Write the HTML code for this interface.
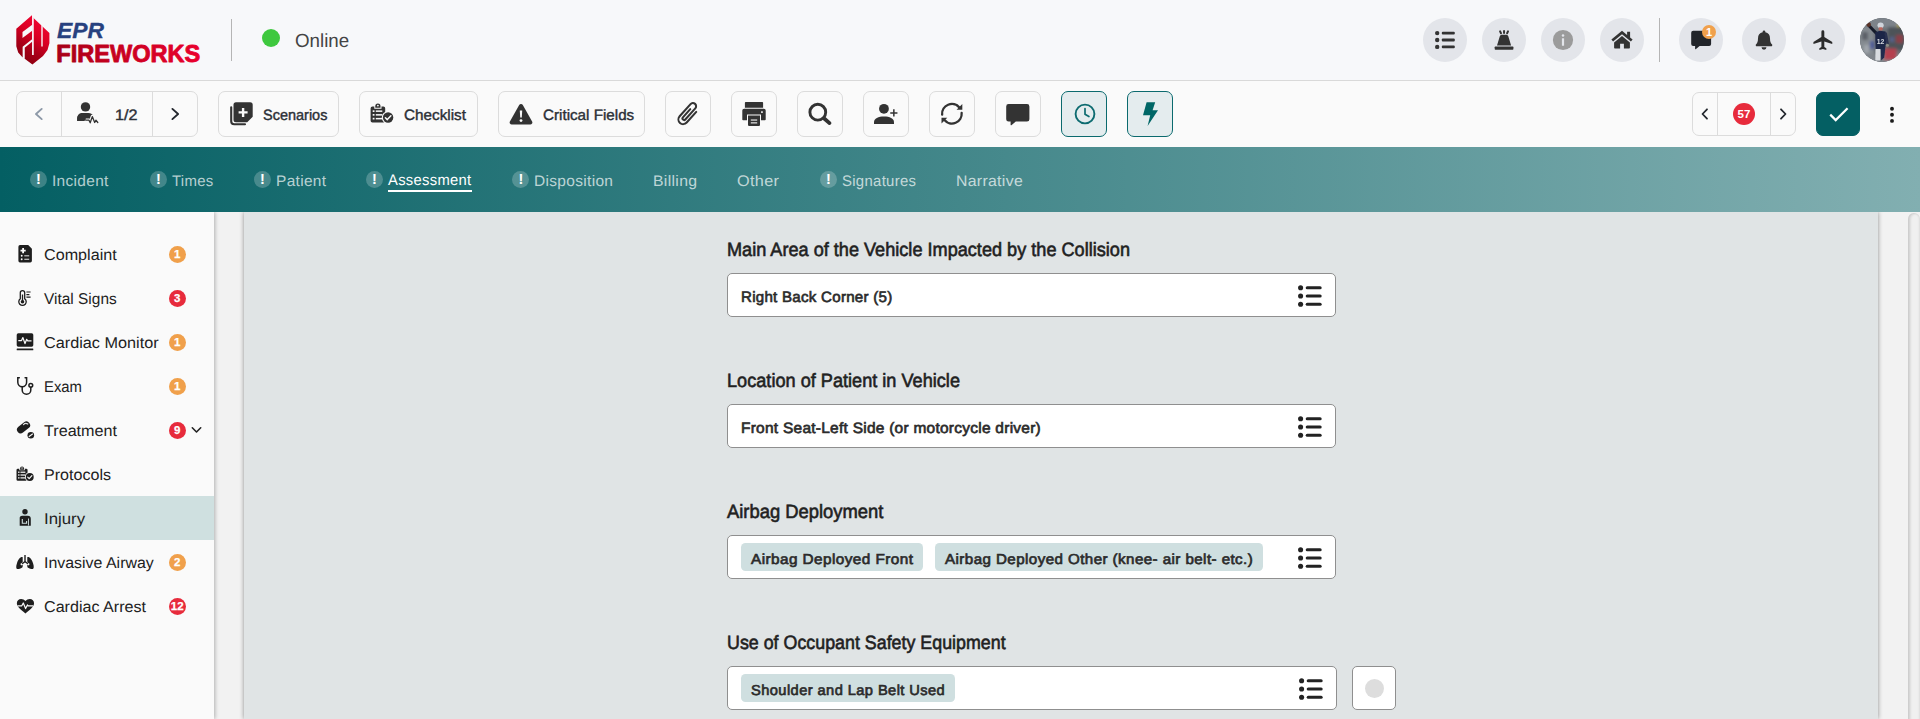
<!DOCTYPE html>
<html lang="en">
<head>
<meta charset="utf-8">
<title>EPR Fireworks - Assessment - Injury</title>
<style>
*{box-sizing:border-box;margin:0;padding:0}
html,body{width:1920px;height:719px;overflow:hidden}
body{font-family:"Liberation Sans",sans-serif;background:#f2f2f2;color:#333;position:relative}
.f{display:inline-block;transform-origin:0 50%;white-space:nowrap}
.abs{position:absolute}
.tx{position:absolute;white-space:nowrap;line-height:1}
svg{display:block}

/* ---------- top header ---------- */
#hdr{z-index:6;position:absolute;left:0;top:0;width:1920px;height:81px;background:#f7f8fa;border-bottom:1px solid #d9d9d9}
#hdr .vdiv{position:absolute;width:1px;background:#b5b5b5}
.circ{position:absolute;top:18px;width:44px;height:44px;border-radius:50%;background:#e3e5ea}
.circ svg{position:absolute}
.online{left:295px;top:30.700px;font-size:19px;color:#444}
.dot{position:absolute;left:262px;top:29px;width:18px;height:18px;border-radius:50%;background:#3ec83e}


.epr{left:57.2px;top:18px;font-size:22.6px;font-weight:bold;font-style:italic;color:#27417f}
.fwk{left:56px;top:40px;font-size:25.3px;font-weight:bold;color:#c8001f}
.fwk .f{background:linear-gradient(90deg,#a90019 0%,#c4001f 35%,#e8002d 100%);-webkit-background-clip:text;background-clip:text;color:transparent}

/* ---------- toolbar ---------- */
#tb{z-index:6;position:absolute;left:0;top:81px;width:1920px;height:66px;background:#fafafa}
.btn{position:absolute;top:10px;height:46px;border:1px solid #dcdcdc;border-radius:7px;background:#fafafa}
.btn.on{background:#e4ecee;border:1.5px solid #0b6a6e}
.btn svg{position:absolute}
.btn .sep{position:absolute;top:0;width:1px;height:44px;background:#dcdcdc}
.bl{font-size:15px;color:#2b2f36;top:14.550px;-webkit-text-stroke:.4px #2b2f36}

/* ---------- tab bar ---------- */
#tabs{z-index:5;position:absolute;left:0;top:147px;width:1920px;height:65px;background:linear-gradient(90deg,#045f63 0%,#82afb1 100%)}
.tab{letter-spacing:.3px;font-size:15.300px;color:rgba(255,255,255,.7);top:25.900px}
.tab.act{color:#fff;top:24.900px}
.ex{position:absolute;top:24px;width:17px;height:17px;border-radius:50%;background:rgba(255,255,255,.22);color:#fff;font-size:14.500px;font-weight:bold;text-align:center;line-height:17px}

/* ---------- sidebar ---------- */
#side{position:absolute;left:0;top:212px;width:214px;height:507px;background:#fafafa;box-shadow:1px 0 4px rgba(0,0,0,.28)}
.it{position:absolute;left:0;width:214px;height:44px}
.it.sel{background:#cfe0e0}
.it .lb{left:44px;top:14.700px;font-size:15.600px;color:#222}
.it svg{position:absolute}
.bdg{position:absolute;left:168.5px;top:13.5px;width:17.5px;height:17.5px;border-radius:50%;color:#fff;font-size:11.500px;font-weight:bold;text-align:center;line-height:17.500px;-webkit-text-stroke:.25px #fff}
.bdg.o{background:#f0a04b}
.bdg.r{background:#e72b3c}

/* ---------- main panel ---------- */
#main{position:absolute;left:244px;top:212px;width:1634px;height:507px;background:#e0e4e5;box-shadow:0 0 4.500px rgba(0,0,0,.42)}
#sbar{position:absolute;left:1908px;top:213px;width:12px;height:520px;border-radius:6px;background:#f0f0f0;box-shadow:inset 2px 0 3px rgba(0,0,0,.16),inset -1px 0 2px rgba(0,0,0,.08)}
.lab{font-size:19.300px;color:#212121;left:483.400px;-webkit-text-stroke:.6px #212121}
.fld{position:absolute;left:483px;width:609px;height:44px;background:#fff;border:1px solid #8f8f8f;border-radius:5px}
.fld .val{letter-spacing:.25px;left:13px;top:15px;font-size:15px;color:#2b2b2b;-webkit-text-stroke:.65px #2b2b2b}
.fld svg.li{position:absolute;left:569px;top:9.500px}
.chip{position:absolute;top:7px;height:28px;border-radius:4.500px;background:#cfdfe0}
.chip .tx{letter-spacing:.4px;left:9.700px;top:8.500px;font-size:14.400px;color:#2b2b2b;-webkit-text-stroke:.65px #2b2b2b}
</style>
</head>
<body>

<!-- ================= HEADER ================= -->
<div id="hdr">

  <svg class="abs" style="left:0;top:0" width="215" height="80" viewBox="0 0 215 80">
    <defs>
      <linearGradient id="gSh" x1="0.7" y1="0.1" x2="0.3" y2="0.95">
        <stop offset="0" stop-color="#ee0530"/><stop offset="0.35" stop-color="#dc0024"/><stop offset="0.7" stop-color="#a80018"/><stop offset="1" stop-color="#8e0010"/>
      </linearGradient>
      <linearGradient id="gFw" gradientUnits="userSpaceOnUse" x1="56" y1="0" x2="201" y2="0">
        <stop offset="0" stop-color="#a60018"/><stop offset="0.4" stop-color="#c6001f"/><stop offset="1" stop-color="#ea002e"/>
      </linearGradient>
    </defs>
    <polygon points="31.9,15.2 16.3,28.8 16.3,46.3 18.2,52.5 22,56.8 32.4,64.6 43,56 47.5,50 49.4,43.2 49.4,33 33.5,18.1" fill="url(#gSh)"/>
    <g stroke="#f7f8fa" fill="none">
      <path d="M32.9 14.5v40.6" stroke-width="1.7"/>
      <path d="M42 25.3v21.2" stroke-width="1.4"/>
      <path d="M32.4 40.3L23.7 47.2v11.6" stroke-width="2.1"/>
    </g>
    <polygon points="22.5,31.9 32.2,24.7 32.2,30.7 22.5,38.1" fill="#f7f8fa"/>
    <text x="57" y="37.5" font-family="Liberation Sans, sans-serif" font-size="22.4" font-weight="bold" font-style="italic" fill="#27417f" stroke="#27417f" stroke-width="0.3" textLength="47" lengthAdjust="spacingAndGlyphs">EPR</text>
    <text x="56.3" y="61.7" font-family="Liberation Sans, sans-serif" font-size="24.8" font-weight="bold" fill="url(#gFw)" stroke="url(#gFw)" stroke-width="0.9" stroke-linejoin="round" textLength="144" lengthAdjust="spacingAndGlyphs">FIREWORKS</text>
  </svg>
  <div class="vdiv" style="left:231px;top:19px;height:42px"></div>
  <div class="dot"></div>
  <div class="tx online"><span class="f" style="transform:matrix(0.9869,0,.0005,1,0,0)">Online</span></div>

  <!-- list -->
  <div class="circ" style="left:1423px"><svg width="44" height="44" viewBox="0 0 44 44" fill="#333">
    <circle cx="14.2" cy="15.1" r="2.2"/><circle cx="14.2" cy="22" r="2.2"/><circle cx="14.2" cy="28.9" r="2.2"/>
    <rect x="18.8" y="13.7" width="13" height="2.8" rx="1"/><rect x="18.8" y="20.6" width="13" height="2.8" rx="1"/><rect x="18.8" y="27.5" width="13" height="2.8" rx="1"/>
  </svg></div>
  <!-- siren -->
  <div class="circ" style="left:1482px"><svg width="44" height="44" viewBox="0 0 44 44" fill="#333">
    <path d="M13.400 28.500h17.300a.7.700 0 0 1 .7.700v1.900a.7.700 0 0 1-.7.700H13.400a.7.700 0 0 1-.7-.7v-1.900a.7.700 0 0 1 .7-.7z"/>
    <path d="M15 27.600l2.800-9.400a2 2 0 0 1 1.900-1.500h4.700a2 2 0 0 1 1.900 1.500l2.800 9.400z"/>
    <g stroke="#333" stroke-width="2" stroke-linecap="round"><path d="M22.050 13v2M18.100 13.400l.9 1.900M26 13.400l-.9 1.900"/></g>
  </svg></div>
  <!-- info -->
  <div class="circ" style="left:1541px"><svg width="44" height="44" viewBox="0 0 44 44">
    <circle cx="22" cy="22" r="10.100" fill="#9b9b9b"/>
    <circle cx="22" cy="17.500" r="1.250" fill="#e3e5ea"/><rect x="20.900" y="20.200" width="2.200" height="7.600" rx=".5" fill="#e3e5ea"/>
  </svg></div>
  <!-- home -->
  <div class="circ" style="left:1600px"><svg width="44" height="44" viewBox="0 0 44 44" fill="#333">
    <path d="M22 12.700l-10.600 8.900 1.700 2 8.900-7.400 8.900 7.400 1.700-2-2.500-2.100v-5.800h-3v3.300z"/>
    <path d="M22 17.900l-7.900 6.600v5.300a.8.8 0 0 0 .8.800h5.200v-4.900h3.800v4.900h5.200a.8.800 0 0 0 .8-.8v-5.300z"/>
  </svg></div>
  <div class="vdiv" style="left:1659px;top:18px;height:44px"></div>
  <!-- chat with badge -->
  <div class="circ" style="left:1679px"><svg width="44" height="44" viewBox="0 0 44 44">
    <path fill="#22252a" d="M14.200 12.800h15.900a2 2 0 0 1 2 2v11.100a2 2 0 0 1-2 2h-9.500l-3.600 3.100a.5.500 0 0 1-.9-.4v-2.700h-1.900a2 2 0 0 1-2-2v-11.100a2 2 0 0 1 2-2z"/>
    <circle cx="30" cy="14" r="7" fill="#f0a04b"/>
    <text x="30" y="18" text-anchor="middle" font-family="Liberation Sans, sans-serif" font-size="11" font-weight="bold" fill="#fff">1</text>
  </svg></div>
  <!-- bell -->
  <div class="circ" style="left:1742px"><svg width="44" height="44" viewBox="0 0 44 44" fill="#333"><g transform="translate(22 21.700) scale(.95) translate(-22 -22)">
    <path d="M22 12.300a1.400 1.400 0 0 1 1.400 1.400v.5a6.300 6.300 0 0 1 4.900 6.200c0 4 1 5.400 2 6.500a1.200 1.200 0 0 1-.9 2.100h-14.800a1.200 1.200 0 0 1-.9-2.100c1-1.100 2-2.500 2-6.500a6.300 6.300 0 0 1 4.900-6.200v-.5a1.400 1.400 0 0 1 1.400-1.400z"/>
    <path d="M19.400 30h5.200a2.600 2.600 0 0 1-5.200 0z"/></g>
  </svg></div>
  <!-- plane -->
  <div class="circ" style="left:1801px"><svg width="44" height="44" viewBox="0 0 44 44" fill="#2b2b2b"><g transform="translate(21.850 21.200) scale(.97) translate(-22 -22.250)">
    <path d="M31.700 27.200v-2l-8.200-5.100v-5.600a1.500 1.500 0 0 0-3 0v5.600l-8.200 5.100v2l8.200-2.500v5.500l-2.100 1.500v1.600l3.600-1 3.600 1v-1.600l-2.100-1.500v-5.500z"/></g>
  </svg></div>
  <!-- avatar -->
  <div class="circ" style="left:1860px;background:#6b7177;overflow:hidden"><svg width="44" height="44" viewBox="0 0 44 44">
    <defs>
      <filter id="bl" x="-20%" y="-20%" width="140%" height="140%"><feGaussianBlur stdDeviation="1.500"/></filter>
      <filter id="bl2" x="-20%" y="-20%" width="140%" height="140%"><feGaussianBlur stdDeviation=".550"/></filter>
      <clipPath id="cpA"><circle cx="22" cy="22" r="22"/></clipPath>
    </defs>
    <g clip-path="url(#cpA)">
      <rect width="44" height="44" fill="#6a7076"/>
      <g filter="url(#bl)">
        <rect x="-2" y="8" width="16" height="30" fill="#858b91"/>
        <rect x="8" y="-2" width="30" height="12" fill="#7d838a"/>
        <rect x="28" y="9" width="18" height="23" fill="#4d5259"/>
        <rect x="36" y="17" width="7" height="8" fill="#8a4048"/>
        <rect x="30" y="19" width="4" height="5" fill="#56618a"/>
        <rect x="37" y="6" width="3" height="3" fill="#b9ad4a"/>
        <rect x="-2" y="36" width="48" height="10" fill="#80858b"/>
        <rect x="24" y="30.500" width="12.500" height="11.500" fill="#b5414f"/>
        <rect x="10" y="23" width="4" height="8" fill="#4e5c9c"/>
        <rect x="4" y="27" width="5" height="8" fill="#a0a6ac"/>
        <rect x="2" y="14" width="6" height="8" fill="#5c6168"/>
      </g>
      <g filter="url(#bl2)">
        <path d="M17.500 16.500L9.300 8" stroke="#161b2c" stroke-width="3.200" stroke-linecap="round"/>
        <circle cx="8.700" cy="6.600" r="2.300" fill="#5a3328"/>
        <path d="M15.300 14.200l4.500-1.500 5.800.8.600 10.500-1.200 7.200-9.200.5-.5-9z" fill="#1f2747"/>
        <path d="M25.800 15.500l1.800 10" stroke="#2a3150" stroke-width="2.400" stroke-linecap="round"/>
        <circle cx="27.400" cy="27.200" r="1.500" fill="#8d8f86"/>
        <ellipse cx="20.600" cy="7.300" rx="3.100" ry="2.900" fill="#d0d5dc"/>
        <rect x="18.700" y="9.200" width="3.900" height="3.300" rx="1" fill="#b8675e"/>
        <path d="M15.500 31h5.200l-.6 11.500h-4.800z" fill="#d9dce0"/>
        <path d="M20.700 31h4.500l-1 8.500-3 3z" fill="#232b4d"/>
      </g>
      <text x="20.600" y="25.800" text-anchor="middle" font-family="Liberation Sans, sans-serif" font-size="6.800" font-weight="bold" fill="#e8ebef" opacity=".9">12</text>
    </g>
  </svg></div>
</div>

<!-- ================= TOOLBAR ================= -->
<div id="tb">
  <!-- patient pager -->
  <div class="btn" style="left:16px;width:182px">
    <div class="sep" style="left:44px"></div><div class="sep" style="left:135px"></div>
    <svg style="left:16px;top:15px" width="12" height="14" viewBox="0 0 12 14" fill="none" stroke="#8d99a8" stroke-width="1.900" stroke-linecap="round" stroke-linejoin="round"><path d="M8.700 1.900L3 7l5.700 5.100"/></svg>
    <svg style="left:58.200px;top:7.800px" width="28" height="26" viewBox="0 0 28 26" fill="#333">
      <circle cx="10.500" cy="6.900" r="4.700"/>
      <path d="M2.200 20.900v-2.700c0-3.100 2.400-5.300 5.500-5.300h5.600c2.600 0 4.700 1.600 5.300 4l-1.300 4z"/>
      <path d="M10.800 20.200H14l1.200 2.600 2.100-6.200 2.400 5.900 1.200-2.300 1.900 2.300" fill="none" stroke="#fafafa" stroke-width="3.400" stroke-linejoin="round" stroke-linecap="round"/>
      <path d="M10.800 20.200H14l1.200 2.600 2.100-6.200 2.400 5.900 1.200-2.300 1.900 2.300" fill="none" stroke="#333" stroke-width="1.300" stroke-linejoin="round" stroke-linecap="round"/>
      <path d="M2.200 20.900v-2.700c0-3.100 2.400-5.300 5.500-5.300h3v6.500l-1.400 1.500z"/>
    </svg>
    <div class="tx bl" style="left:97.700px"><span class="f" style="transform:matrix(1.0787,0,.0005,1,0,0)">1/2</span></div>
    <svg style="left:152.300px;top:15px" width="12" height="14" viewBox="0 0 12 14" fill="none" stroke="#23272e" stroke-width="1.900" stroke-linecap="round" stroke-linejoin="round"><path d="M3.400 1.900L9.100 7l-5.700 5.100"/></svg>
  </div>
  <!-- scenarios -->
  <div class="btn" style="left:218px;width:121px">
    <svg style="left:10px;top:9px" width="26" height="26" viewBox="0 0 26 26">
      <path d="M7 1.300h14.200a2.500 2.500 0 0 1 2.500 2.500v12l-5.500 5.500h-11.200a2.500 2.500 0 0 1-2.500-2.500v-15a2.500 2.500 0 0 1 2.500-2.500z" fill="#333"/>
      <path d="M12.900 6.900h2.400v3.300h3.300v2.400h-3.300v3.300h-2.400v-3.300h-3.300v-2.400h3.300z" fill="#fafafa"/>
      <path d="M2.200 6.300v14a3 3 0 0 0 3 3h10.800" fill="none" stroke="#333" stroke-width="2.100" stroke-linecap="round"/>
    </svg>
    <div class="tx bl" style="left:44.400px"><span class="f" style="transform:matrix(0.9655,0,.0005,1,0,0)">Scenarios</span></div>
  </div>
  <!-- checklist -->
  <div class="btn" style="left:359px;width:119px">
    <svg style="left:10px;top:11px" width="26" height="24" viewBox="0 0 26 24" fill="#333">
      <path d="M5.300 3.200a2.600 2.600 0 0 1 5.200 0v1.600h-5.200z"/><circle cx="7.900" cy="2.600" r=".9" fill="#fafafa"/>
      <path d="M2.400 3.500h1.900v2.200h7.200v-2.200h1.900a1.800 1.800 0 0 1 1.800 1.800v12.500a1.800 1.800 0 0 1-1.800 1.800h-11a1.800 1.800 0 0 1-1.800-1.800v-12.500a1.800 1.800 0 0 1 1.800-1.800z"/>
      <g fill="#fafafa"><rect x="2.700" y="7.300" width="1.800" height="1.700"/><rect x="5.800" y="7.400" width="6.500" height="1.500"/><rect x="2.700" y="11" width="1.800" height="1.700"/><rect x="5.800" y="11.100" width="6.500" height="1.500"/><rect x="2.700" y="14.800" width="1.800" height="1.700"/><rect x="5.800" y="14.900" width="6.500" height="1.500"/></g>
      <circle cx="18.100" cy="14.500" r="6.300" fill="#fafafa"/>
      <circle cx="18.100" cy="14.500" r="5.200"/>
      <path d="M15.400 14.700l1.900 1.900 3.600-3.800" fill="none" stroke="#fafafa" stroke-width="1.500" stroke-linecap="round" stroke-linejoin="round"/>
    </svg>
    <div class="tx bl" style="left:44.300px"><span class="f" style="transform:matrix(1.0187,0,.0005,1,0,0)">Checklist</span></div>
  </div>
  <!-- critical fields -->
  <div class="btn" style="left:498px;width:147px">
    <svg style="left:9px;top:10.700px" width="26" height="24" viewBox="0 0 26 24">
      <path d="M11.200 2.100a2.100 2.100 0 0 1 3.600 0l9.300 16.300a2.100 2.100 0 0 1-1.800 3.100h-18.600a2.100 2.100 0 0 1-1.800-3.100z" fill="#333"/>
      <path d="M11.800 7.400h2.400l-.4 7.200h-1.600z" fill="#fafafa"/><circle cx="13" cy="17.600" r="1.450" fill="#fafafa"/>
    </svg>
    <div class="tx bl" style="left:44px"><span class="f" style="transform:matrix(1.0132,0,.0005,1,0,0)">Critical Fields</span></div>
  </div>
  <!-- paperclip -->
  <div class="btn" style="left:665px;width:46px"><svg style="left:0;top:0" width="44" height="44" viewBox="0 0 44 44" fill="none" stroke="#333" stroke-width="1.850" stroke-linecap="round" stroke-linejoin="round">
    <path transform="translate(22.100 21.900) rotate(42) scale(1.1)" d="M4.300-6.300V6.700A4.300 4.300 0 0 1-4.300 6.700V-8.100A2.900 2.900 0 0 1 1.500-8.100V5.500A1.450 1.450 0 0 1-1.400 5.500V-4.500"/>
  </svg></div>
  <!-- print -->
  <div class="btn" style="left:731px;width:46px"><svg style="left:9px;top:9px" width="28" height="28" viewBox="0 0 28 28" fill="#333">
    <path d="M4.700 1h16.600a.8.800 0 0 1 .8.800v4.900h-18.200v-4.900a.8.800 0 0 1 .8-.8z"/>
    <path d="M3.100 7.800h19.800a1.800 1.800 0 0 1 1.800 1.800v8.800a.8.800 0 0 1-.8.800h-21.800a.8.800 0 0 1-.8-.8v-8.800a1.800 1.800 0 0 1 1.800-1.800z"/>
    <rect x="20.100" y="10.300" width="1.700" height="1.600" fill="#fafafa"/>
    <path d="M6 13.500h14v11.200a1.200 1.200 0 0 1-1.200 1.200h-11.600a1.200 1.200 0 0 1-1.200-1.200z" fill="#fafafa"/>
    <path d="M7 14.500h12v9.600a.8.800 0 0 1-.8.800h-10.400a.8.800 0 0 1-.8-.8z"/>
    <rect x="9.800" y="18.400" width="6.400" height="1.300" fill="#d9d9d9"/><rect x="9.800" y="21.200" width="6.400" height="1.300" fill="#d9d9d9"/>
  </svg></div>
  <!-- search -->
  <div class="btn" style="left:797px;width:46px"><svg style="left:10px;top:10px" width="26" height="26" viewBox="0 0 26 26" fill="none" stroke="#333" stroke-linecap="round">
    <circle cx="9.800" cy="10.200" r="7.900" stroke-width="2.900"/><path d="M16.200 16.500l5.300 4.600" stroke-width="3.800"/>
  </svg></div>
  <!-- user plus -->
  <div class="btn" style="left:863px;width:46px"><svg style="left:10px;top:11px" width="28" height="24" viewBox="0 0 28 24" fill="#333">
    <circle cx="9.950" cy="5.800" r="4.900"/>
    <path d="M0 20.900v-1.600c0-3.900 4.400-5.700 10-5.700s10 1.800 10 5.700v1.600z"/>
    <path d="M19.850 6.300v7.200M16.250 9.900h7.200" fill="none" stroke="#333" stroke-width="1.500"/>
  </svg></div>
  <!-- refresh -->
  <div class="btn" style="left:929px;width:46px"><svg style="left:10px;top:10px" width="26" height="26" viewBox="0 0 26 26" fill="#333">
    <path d="M2.140 12.600A9.800 9.800 0 0 1 19.400 5.450" fill="none" stroke="#333" stroke-width="2.300" stroke-linecap="round"/>
    <path d="M22.300 2.060v5.740h-5.740z"/>
    <path d="M21.660 10.900A9.800 9.800 0 0 1 4.400 18.050" fill="none" stroke="#333" stroke-width="2.300" stroke-linecap="round"/>
    <path d="M1.500 21.440v-5.740h5.740z"/>
  </svg></div>
  <!-- chat -->
  <div class="btn" style="left:995px;width:46px"><svg style="left:9.300px;top:10.500px" width="26" height="24" viewBox="0 0 26 24" fill="#333">
    <path d="M3.600 1h18.400a2.400 2.400 0 0 1 2.400 2.400v12.800a2.400 2.400 0 0 1-2.400 2.400h-11.200l-4.400 3.600a.5.500 0 0 1-.8-.4v-3.200h-2a2.400 2.400 0 0 1-2.400-2.400v-12.800a2.400 2.400 0 0 1 2.400-2.400z"/>
  </svg></div>
  <!-- clock -->
  <div class="btn on" style="left:1061px;width:46px"><svg style="left:10.500px;top:10px" width="24" height="24" viewBox="0 0 24 24" fill="none" stroke="#0d6b70" stroke-linecap="round" stroke-linejoin="round">
    <circle cx="12" cy="12" r="9.400" stroke-width="1.900"/><path d="M12 6.600v5.700l3.900 2.300" stroke-width="1.700"/>
  </svg></div>
  <!-- bolt -->
  <div class="btn on" style="left:1127px;width:46px"><svg style="left:13px;top:8.500px" width="18" height="26" viewBox="0 0 18 26" fill="#066">
    <path d="M5.600 1.200h8.600l-2.600 8h5.400l-10.400 15.800 2.600-10.700h-7.200z"/>
  </svg></div>

  <!-- record pager -->
  <div class="btn" style="left:1692px;width:104px;top:11px;height:44px">
    <div class="sep" style="left:24px;height:42px"></div><div class="sep" style="left:77px;height:42px"></div>
    <svg style="left:6px;top:14px" width="12" height="14" viewBox="0 0 12 14" fill="none" stroke="#23272e" stroke-width="1.800" stroke-linecap="round" stroke-linejoin="round"><path d="M8 2.300L3.500 7 8 11.700"/></svg>
    <div class="abs" style="left:40px;top:10px;width:22px;height:22px;border-radius:50%;background:#e72b3c;color:#fff;font-size:11.500px;font-weight:bold;text-align:center;line-height:22px">57</div>
    <svg style="left:83.500px;top:14px" width="12" height="14" viewBox="0 0 12 14" fill="none" stroke="#23272e" stroke-width="1.800" stroke-linecap="round" stroke-linejoin="round"><path d="M4 2.300L8.500 7 4 11.700"/></svg>
  </div>
  <div class="btn" style="left:1816px;width:44px;top:11px;height:44px;background:#045f63;border-color:#045f63;border-radius:7px">
    <svg style="left:11px;top:13px" width="22" height="18" viewBox="0 0 22 18" fill="none" stroke="#fff" stroke-width="2.200" stroke-linecap="square" stroke-linejoin="miter"><path d="M3 9.400l4.700 4.700L18.800 3"/></svg>
  </div>
  <svg class="abs" style="left:1887px;top:24px" width="10" height="20" viewBox="0 0 10 20" fill="#1b1b1b"><circle cx="5" cy="3.700" r="1.950"/><circle cx="5" cy="9.800" r="1.950"/><circle cx="5" cy="15.900" r="1.950"/></svg>
</div>

<!-- ================= TAB BAR ================= -->
<div id="tabs">
  <div class="ex" style="left:30px">!</div><div class="tx tab" style="left:52.3px"><span class="f" style="transform:matrix(1.0128,0,.0005,1,0,0)">Incident</span></div>
  <div class="ex" style="left:150px">!</div><div class="tx tab" style="left:171.7px"><span class="f" style="transform:matrix(0.9770,0,.0005,1,0,0)">Times</span></div>
  <div class="ex" style="left:254px">!</div><div class="tx tab" style="left:275.7px"><span class="f" style="transform:matrix(1.0114,0,.0005,1,0,0)">Patient</span></div>
  <div class="ex" style="left:366px">!</div><div class="tx tab act" style="left:388.3px"><span class="f" style="transform:matrix(0.9663,0,.0005,1,0,0)">Assessment</span></div>
  <div class="abs" style="left:388px;top:43px;width:84px;height:1.5px;background:#fff"></div>
  <div class="ex" style="left:512.3px">!</div><div class="tx tab" style="left:534px"><span class="f" style="transform:matrix(1.0150,0,.0005,1,0,0)">Disposition</span></div>
  <div class="tx tab" style="left:653.3px"><span class="f" style="transform:matrix(1.0344,0,.0005,1,0,0)">Billing</span></div>
  <div class="tx tab" style="left:737px"><span class="f" style="transform:matrix(1.0637,0,.0005,1,0,0)">Other</span></div>
  <div class="ex" style="left:820px">!</div><div class="tx tab" style="left:841.7px"><span class="f" style="transform:matrix(0.9758,0,.0005,1,0,0)">Signatures</span></div>
  <div class="tx tab" style="left:956.3px"><span class="f" style="transform:matrix(1.0345,0,.0005,1,0,0)">Narrative</span></div>
</div>

<!-- ================= MAIN ================= -->
<div id="main">
  <div class="tx lab" style="top:27.600px"><span class="f" style="transform:matrix(0.9400,0,.0005,1,0,0)">Main Area of the Vehicle Impacted by the Collision</span></div>
  <div class="fld" style="top:61px"><div class="tx val"><span class="f" style="transform:matrix(1.0079,0,.0005,1,0,0)">Right Back Corner (5)</span></div><svg class="li" width="26" height="24" viewBox="0 0 26 24" fill="#222"><circle cx="3.600" cy="3.700" r="2.550"/><circle cx="3.600" cy="11.950" r="2.550"/><circle cx="3.600" cy="20.200" r="2.550"/><rect x="8.700" y="2.150" width="16" height="3.100" rx="1.550"/><rect x="8.700" y="10.400" width="16" height="3.100" rx="1.550"/><rect x="8.700" y="18.650" width="16" height="3.100" rx="1.550"/></svg></div>

  <div class="tx lab" style="top:158.600px"><span class="f" style="transform:matrix(0.9409,0,.0005,1,0,0)">Location of Patient in Vehicle</span></div>
  <div class="fld" style="top:192px"><div class="tx val"><span class="f" style="transform:matrix(1.0315,0,.0005,1,0,0)">Front Seat-Left Side (or motorcycle driver)</span></div><svg class="li" width="26" height="24" viewBox="0 0 26 24" fill="#222"><circle cx="3.600" cy="3.700" r="2.550"/><circle cx="3.600" cy="11.950" r="2.550"/><circle cx="3.600" cy="20.200" r="2.550"/><rect x="8.700" y="2.150" width="16" height="3.100" rx="1.550"/><rect x="8.700" y="10.400" width="16" height="3.100" rx="1.550"/><rect x="8.700" y="18.650" width="16" height="3.100" rx="1.550"/></svg></div>

  <div class="tx lab" style="top:289.600px"><span class="f" style="transform:matrix(0.9537,0,.0005,1,0,0)">Airbag Deployment</span></div>
  <div class="fld" style="top:323px">
    <div class="chip" style="left:13px;width:182px"><div class="tx"><span class="f" style="transform:matrix(1.0657,0,.0005,1,0,0)">Airbag Deployed Front</span></div></div>
    <div class="chip" style="left:207px;width:328px"><div class="tx"><span class="f" style="transform:matrix(1.0528,0,.0005,1,0,0)">Airbag Deployed Other (knee- air belt- etc.)</span></div></div>
    <svg class="li" width="26" height="24" viewBox="0 0 26 24" fill="#222"><circle cx="3.600" cy="3.700" r="2.550"/><circle cx="3.600" cy="11.950" r="2.550"/><circle cx="3.600" cy="20.200" r="2.550"/><rect x="8.700" y="2.150" width="16" height="3.100" rx="1.550"/><rect x="8.700" y="10.400" width="16" height="3.100" rx="1.550"/><rect x="8.700" y="18.650" width="16" height="3.100" rx="1.550"/></svg>
  </div>

  <div class="tx lab" style="top:420.600px"><span class="f" style="transform:matrix(0.9251,0,.0005,1,0,0)">Use of Occupant Safety Equipment</span></div>
  <div class="fld" style="top:454px;width:610px">
    <div class="chip" style="left:13px;width:214px"><div class="tx"><span class="f" style="transform:matrix(1.0198,0,.0005,1,0,0)">Shoulder and Lap Belt Used</span></div></div>
    <svg class="li" style="left:569.500px" width="26" height="24" viewBox="0 0 26 24" fill="#222"><circle cx="3.600" cy="3.700" r="2.550"/><circle cx="3.600" cy="11.950" r="2.550"/><circle cx="3.600" cy="20.200" r="2.550"/><rect x="8.700" y="2.150" width="16" height="3.100" rx="1.550"/><rect x="8.700" y="10.400" width="16" height="3.100" rx="1.550"/><rect x="8.700" y="18.650" width="16" height="3.100" rx="1.550"/></svg>
  </div>
  <div class="fld" style="top:454px;left:1108px;width:44px"><div class="abs" style="left:12px;top:12px;width:19px;height:19px;border-radius:50%;background:#ddd"></div></div>
</div>
<div id="sbar"></div>

<!-- ================= SIDEBAR ================= -->
<div id="side">
  <div class="it" style="top:20px">
    <svg style="left:12px;top:9px" width="26" height="26" viewBox="0 0 26 26">
      <path d="M8 4.100h8.200l3.700 3.700v12a1.600 1.600 0 0 1-1.600 1.600h-10.300a1.600 1.600 0 0 1-1.600-1.600v-14.100a1.600 1.600 0 0 1 1.600-1.600z" fill="#1e1e1e"/>
      <path d="M10.200 7h1.800v1.700h1.700v1.800h-1.700v1.700h-1.800v-1.700h-1.700v-1.800h1.700z" fill="#fafafa"/>
      <circle cx="9.700" cy="14.800" r=".95" fill="#fafafa"/><circle cx="9.700" cy="18.300" r=".95" fill="#fafafa"/>
      <rect x="12.300" y="14.200" width="4.900" height="1.200" fill="#c9c9c9"/><rect x="12.300" y="17.700" width="4.900" height="1.200" fill="#c9c9c9"/>
    </svg>
    <div class="tx lb"><span class="f" style="transform:matrix(1.0356,0,.0005,1,0,0)">Complaint</span></div><div class="bdg o">1</div></div>
  <div class="it" style="top:64px">
    <svg style="left:12px;top:9px" width="26" height="26" viewBox="0 0 26 26" fill="none" stroke="#1e1e1e">
      <path d="M8.300 13.800v-6a2.200 2.200 0 0 1 4.400 0v6a3.700 3.700 0 1 1-4.400 0z" stroke-width="1.300"/>
      <circle cx="10.500" cy="16.800" r="1.800" fill="#1e1e1e" stroke="none"/><path d="M10.500 9.500v7" stroke-width="1.300"/>
      <path d="M14.400 7h4.200M14.400 9.600h3M14.400 12.200h4.200" stroke-width="1.200"/>
    </svg>
    <div class="tx lb"><span class="f" style="transform:matrix(0.9904,0,.0005,1,0,0)">Vital Signs</span></div><div class="bdg r">3</div></div>
  <div class="it" style="top:108px">
    <svg style="left:12px;top:9px" width="26" height="26" viewBox="0 0 26 26">
      <rect x="4.700" y="4.300" width="16.600" height="13.400" rx="1.600" fill="#1e1e1e"/>
      <rect x="4.700" y="19.600" width="16.600" height="1.700" rx=".5" fill="#1e1e1e"/>
      <path d="M6.300 11.600h3.200l1.400-3 2.100 6 1.700-4.300.9 1.500h3.900" fill="none" stroke="#fafafa" stroke-width="1.250" stroke-linejoin="round"/>
    </svg>
    <div class="tx lb"><span class="f" style="transform:matrix(1.0421,0,.0005,1,0,0)">Cardiac Monitor</span></div><div class="bdg o">1</div></div>
  <div class="it" style="top:152px">
    <svg style="left:12px;top:9px" width="26" height="26" viewBox="0 0 26 26" fill="none" stroke="#1e1e1e" stroke-width="1.500" stroke-linecap="round">
      <path d="M7.300 4.700h-1.500v4.600a4.400 4.400 0 0 0 8.800 0v-4.600h-1.500"/>
      <path d="M10.200 13.700v3.200a4.300 4.300 0 0 0 8.600 0v-2.600"/>
      <circle cx="18.800" cy="12.300" r="1.900"/>
    </svg>
    <div class="tx lb"><span class="f" style="transform:matrix(0.9530,0,.0005,1,0,0)">Exam</span></div><div class="bdg o">1</div></div>
  <div class="it" style="top:196px">
    <svg style="left:12px;top:9px" width="26" height="26" viewBox="0 0 26 26">
      <path d="M8.700 12.700l5.700-4.500" stroke="#1e1e1e" stroke-width="7.400" stroke-linecap="round"/>
      <path d="M11.500 7.600a3.400 3.400 0 0 1 4.300-.6" fill="none" stroke="#fafafa" stroke-width="1.200" stroke-linecap="round" opacity=".9"/>
      <circle cx="18.800" cy="18.200" r="3.300" fill="#1e1e1e"/>
      <path d="M16.800 19.700l4-3" stroke="#fafafa" stroke-width="1.100"/>
    </svg>
    <div class="tx lb"><span class="f" style="transform:matrix(1.0357,0,.0005,1,0,0)">Treatment</span></div><div class="bdg r">9</div>
    <svg style="left:191px;top:18px" width="11" height="8" viewBox="0 0 11 8" fill="none" stroke="#222" stroke-width="1.600" stroke-linecap="round" stroke-linejoin="round"><path d="M1.300 1.800l4.200 4.200 4.200-4.200"/></svg>
  </div>
  <div class="it" style="top:240px">
    <svg style="left:15.850px;top:13.850px" width="19.800" height="18.200" viewBox="0 0 26 24" fill="#1e1e1e">
      <path d="M5.300 3.200a2.600 2.600 0 0 1 5.200 0v1.600h-5.200z"/><circle cx="7.900" cy="2.600" r=".9" fill="#fafafa"/>
      <path d="M2.400 3.500h1.900v2.200h7.200v-2.200h1.900a1.800 1.800 0 0 1 1.800 1.800v12.500a1.800 1.800 0 0 1-1.800 1.800h-11a1.800 1.800 0 0 1-1.800-1.800v-12.500a1.800 1.800 0 0 1 1.800-1.800z"/>
      <g fill="#fafafa"><rect x="2.700" y="7.300" width="1.900" height="1.800"/><rect x="5.800" y="7.400" width="6.500" height="1.600"/><rect x="2.700" y="11" width="1.900" height="1.800"/><rect x="5.800" y="11.100" width="6.500" height="1.600"/><rect x="2.700" y="14.800" width="1.900" height="1.800"/><rect x="5.800" y="14.900" width="6.500" height="1.600"/></g>
      <circle cx="18.100" cy="14.500" r="6.400" fill="#fafafa"/>
      <circle cx="18.100" cy="14.500" r="5.200"/>
      <path d="M15.400 14.700l1.900 1.900 3.600-3.800" fill="none" stroke="#fafafa" stroke-width="1.600" stroke-linecap="round" stroke-linejoin="round"/>
    </svg>
    <div class="tx lb"><span class="f" style="transform:matrix(1.0321,0,.0005,1,0,0)">Protocols</span></div></div>
  <div class="it sel" style="top:284px">
    <svg style="left:12px;top:9px" width="26" height="26" viewBox="0 0 26 26" fill="#1e1e1e">
      <circle cx="13" cy="6.700" r="2.700"/>
      <path d="M10.200 10.700h5.600a3 3 0 0 1 3 3v7.100h-11.100v-7.100a2.500 2.500 0 0 1 2.500-3z"/>
      <path d="M10.300 14v4.200h4.300v-2.200" fill="none" stroke="#cfe0e0" stroke-width="1.100"/>
      <path d="M16.500 13.500v7" fill="none" stroke="#cfe0e0" stroke-width=".9"/>
    </svg>
    <div class="tx lb"><span class="f" style="transform:matrix(1.0776,0,.0005,1,0,0)">Injury</span></div></div>
  <div class="it" style="top:328px">
    <svg style="left:12px;top:9px" width="26" height="26" viewBox="0 0 26 26" fill="#1e1e1e">
      <path d="M12.300 6h1.400v6.300l2.600 2-.8 1-2.500-1.900-2.500 1.900-.8-1 2.600-2z"/>
      <path d="M10.700 8.200c-2.300-.6-4.500 2.300-5.800 6.200-.8 2.300-1.100 5.600.7 5.600 1.300 0 3.200-.6 4.300-1.300.7-.4.800-1 .8-1.800v-1.500l-1.400 1-1-1.300 2.400-1.800z"/>
      <path d="M15.300 8.200c2.300-.6 4.500 2.300 5.800 6.200.8 2.300 1.100 5.600-.7 5.600-1.300 0-3.200-.6-4.300-1.300-.7-.4-.8-1-.8-1.800v-1.500l1.400 1 1-1.300-2.400-1.800z"/>
    </svg>
    <div class="tx lb"><span class="f" style="transform:matrix(1.0217,0,.0005,1,0,0)">Invasive Airway</span></div><div class="bdg o">2</div></div>
  <div class="it" style="top:372px">
    <svg style="left:12px;top:9px" width="26" height="26" viewBox="0 0 26 26">
      <path d="M13.450 8c1.100-1.400 2.700-2.100 4.300-2.100 2.500 0 4.300 1.900 4.300 4.300 0 3.600-4 6.500-8.600 10.200-4.600-3.700-8.600-6.600-8.600-10.200 0-2.400 1.800-4.300 4.300-4.300 1.600 0 3.200.7 4.300 2.100z" fill="#1e1e1e"/>
      <path d="M5.500 12.800h4.300l1.500-2.800 2.300 5.600 1.800-3.700.7.900h5" fill="none" stroke="#fafafa" stroke-width="1.200" stroke-linejoin="round"/>
    </svg>
    <div class="tx lb"><span class="f" style="transform:matrix(1.0324,0,.0005,1,0,0)">Cardiac Arrest</span></div><div class="bdg r">12</div></div>
</div>

</body>
</html>
